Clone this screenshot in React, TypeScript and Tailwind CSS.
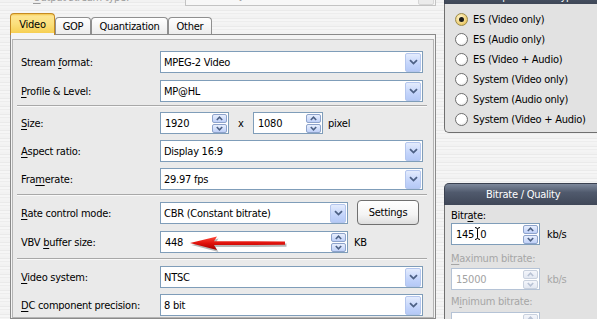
import React from "react";

function Chevron({ up = false, color = "#4d6185" }: { up?: boolean; color?: string }) {
  return (
    <svg width="7" height="5" viewBox="0 0 7 5">
      <path
        d={up ? "M0.8 4 L3.5 1.2 L6.2 4" : "M0.8 1 L3.5 3.8 L6.2 1"}
        stroke={color}
        strokeWidth="1.6"
        fill="none"
      />
    </svg>
  );
}

function DropBtn() {
  return (
    <div className="w-[16px] h-[19px] rounded-[2px] border border-[#b4c6ee] bg-[linear-gradient(to_bottom,#e4ecfd,#c3d4fb_60%,#b5c9f6)] flex items-center justify-center">
      <svg width="9" height="6" viewBox="0 0 9 6">
        <path d="M1 1.2 L4.5 4.6 L8 1.2" stroke="#4d6185" strokeWidth="1.8" fill="none" />
      </svg>
    </div>
  );
}

function Spin({ disabled = false }: { disabled?: boolean }) {
  const half = disabled
    ? "h-[9px] rounded-[2px] border border-[#c9d1de] bg-[linear-gradient(to_bottom,#f4f6fb,#e3e8f2)] flex items-center justify-center"
    : "h-[9px] rounded-[2px] border border-[#8ea3cb] bg-[linear-gradient(to_bottom,#e8effd,#bfd0f8)] flex items-center justify-center";
  const c = disabled ? "#b8c2d4" : "#4d6185";
  return (
    <div className="flex flex-col w-[15px] gap-[1px]">
      <div className={half}>
        <Chevron up color={c} />
      </div>
      <div className={half}>
        <Chevron color={c} />
      </div>
    </div>
  );
}

function Combo({ value, className }: { value: string; className: string }) {
  return (
    <div className={`h-[22px] border border-[#7f9db9] bg-white flex items-center justify-between pl-[3px] pr-[1px] ${className}`}>
      <span>{value}</span>
      <DropBtn />
    </div>
  );
}

function SpinField({ children, className, disabled = false }: { children: React.ReactNode; className: string; disabled?: boolean }) {
  return (
    <div
      className={`h-[22px] border ${disabled ? "border-[#b5c3d6] text-[#a3a3a3]" : "border-[#7f9db9]"} bg-white flex items-center justify-between pl-[4px] pr-[1px] ${className}`}
    >
      <span className="flex items-center">{children}</span>
      <Spin disabled={disabled} />
    </div>
  );
}

function U({ c }: { c: string }) {
  return <span className="underline underline-offset-[2px]">{c}</span>;
}

function Row({ label, children, className }: { label: React.ReactNode; children: React.ReactNode; className: string }) {
  return (
    <div className={`flex items-center h-[22px] pl-[8px] ${className}`}>
      <div className="w-[139px] shrink-0">{label}</div>
      {children}
    </div>
  );
}

function Sep({ className }: { className: string }) {
  return <div className={`ml-[4px] w-[410px] h-[2px] border-t border-t-[#a8a8a8] bg-[#f9f9f9] ${className}`} />;
}

function Radio({ checked = false, label }: { checked?: boolean; label: string }) {
  return (
    <div className="flex items-center h-[20px] gap-[5px]">
      {checked ? (
        <div className="w-[13px] h-[13px] rounded-full border border-[#9b8a4a] bg-[radial-gradient(circle_at_40%_35%,#fff6d2,#f0d27a_60%,#d6ad3c)] flex items-center justify-center">
          <div className="w-[5px] h-[5px] rounded-full bg-[#1a1a1a]" />
        </div>
      ) : (
        <div className="w-[13px] h-[13px] rounded-full border border-[#6f6f6f] bg-[radial-gradient(circle_at_40%_35%,#ffffff,#ffffff_50%,#d9d9d9)]" />
      )}
      <span>{label}</span>
    </div>
  );
}

function IBeam() {
  return (
    <span className="inline-block w-[6px] h-[14px] relative">
      <svg width="7" height="15" viewBox="0 0 7 15" className="absolute left-0 -top-px">
        <path d="M1 1.5 Q3.5 1.5 3.5 3.5 V11.5 Q3.5 13.5 1 13.5 M6 1.5 Q3.5 1.5 3.5 3.5 M3.5 11.5 Q3.5 13.5 6 13.5" stroke="#ffffff" strokeWidth="2.6" fill="none" />
        <path d="M1 1.5 Q3.5 1.5 3.5 3.5 V11.5 Q3.5 13.5 1 13.5 M6 1.5 Q3.5 1.5 3.5 3.5 M3.5 11.5 Q3.5 13.5 6 13.5" stroke="#000000" strokeWidth="1" fill="none" />
      </svg>
    </span>
  );
}

export default function App() {
  return (
    <div className="relative w-[597px] h-[319px] overflow-hidden flex text-[11px] leading-[13px] tracking-[-0.25px] text-black font-['DejaVu_Sans_Condensed','Liberation_Sans',sans-serif] bg-[repeating-linear-gradient(to_bottom,#f2f2f2_0px,#f2f2f2_2px,#eaeaea_2px,#eaeaea_3px,#f6f6f6_3px,#f6f6f6_5px,#ededed_5px,#ededed_6px,#f4f4f4_6px,#f4f4f4_8px)]">
      {/* Left column */}
      <div className="w-[437px] shrink-0 flex flex-col">
        {/* partially visible top row */}
        <div className="h-[6px] flex items-end">
          <span className="ml-[33px] mb-[2px] text-[#9c9c9c] w-[152px] shrink-0">
            <U c="O" />utput stream type:
          </span>
          <div className="w-[251px] h-[22px] shrink-0 border border-[#c3c3c3] bg-[#f7f7f7] flex items-center justify-between pl-[4px] pr-[1px] text-[#9c9c9c]">
            <span>Elementary stream</span>
            <div className="w-[16px] h-[19px] rounded-[2px] border border-[#d6d6d6] bg-[#ebebeb]" />
          </div>
        </div>

        {/* Tabs */}
        <div className="mt-[7px] h-[21px] flex items-end pl-[10px]">
          <div className="relative z-10 w-[45px] h-[22px] -mb-px rounded-t-[4px] border border-b-0 border-[#c58a22] bg-[linear-gradient(to_bottom,#f3c44a_0px,#fde592_2px,#fbe07c_10px,#f6cf52_19px,#f4f4f4_19px)] flex justify-center pt-[4px]">
            Video
          </div>
          <div className="w-[36px] h-[17px] rounded-t-[4px] border border-b-0 border-[#8f8f8f] bg-[linear-gradient(to_bottom,#ffffff,#ececec)] flex justify-center pt-[2px]">
            GOP
          </div>
          <div className="w-[77px] h-[17px] rounded-t-[4px] border border-b-0 border-[#8f8f8f] bg-[linear-gradient(to_bottom,#ffffff,#ececec)] flex justify-center pt-[2px]">
            Quantization
          </div>
          <div className="w-[44px] h-[17px] rounded-t-[4px] border border-b-0 border-[#8f8f8f] bg-[linear-gradient(to_bottom,#ffffff,#ececec)] flex justify-center pt-[2px]">
            Other
          </div>
        </div>

        {/* Tab panel */}
        <div className="ml-[10px] w-[426px] flex-1 border border-[#8a8a8a] bg-[#f4f4f4] pt-[4px] px-px">
          <div className="h-full border border-[#b4b4b4] bg-[#eaeaea] pt-[11px]">
            <Row className="" label={<span>Stream <U c="f" />ormat:</span>}>
              <Combo value="MPEG-2 Video" className="w-[263px]" />
            </Row>
            <Row className="mt-[7px]" label={<span><U c="P" />rofile &amp; Level:</span>}>
              <Combo value="MP@HL" className="w-[263px]" />
            </Row>
            <Sep className="mt-[3px]" />
            <Row className="mt-[5px]" label={<span><U c="S" />ize:</span>}>
              <SpinField className="w-[69px]">1920</SpinField>
              <span className="ml-[9px] w-[15px]">x</span>
              <SpinField className="w-[70px]">1080</SpinField>
              <span className="ml-[5px]">pixel</span>
            </Row>
            <Row className="mt-[6px]" label={<span><U c="A" />spect ratio:</span>}>
              <Combo value="Display 16:9" className="w-[263px]" />
            </Row>
            <Row className="mt-[6px]" label={<span>Fra<U c="m" />erate:</span>}>
              <Combo value="29.97 fps" className="w-[263px]" />
            </Row>
            <Sep className="mt-[4px]" />
            <Row className="mt-[6px]" label={<span><U c="R" />ate control mode:</span>}>
              <Combo value="CBR (Constant bitrate)" className="w-[188px]" />
              <div className="ml-[9px] w-[62px] h-[25px] -mt-[2px] rounded-[4px] border border-[#707070] bg-[linear-gradient(to_bottom,#ffffff,#f4f4f4_60%,#dedede)] flex items-center justify-center">
                Settings
              </div>
            </Row>
            <Row className="mt-[7px]" label={<span>VBV <U c="b" />uffer size:</span>}>
              <SpinField className="w-[188px]">448</SpinField>
              <span className="ml-[6px]">KB</span>
            </Row>
            <Sep className="mt-[5px]" />
            <Row className="mt-[6px]" label={<span><U c="V" />ideo system:</span>}>
              <Combo value="NTSC" className="w-[263px]" />
            </Row>
            <Row className="mt-[6px]" label={<span><U c="D" />C component precision:</span>}>
              <Combo value="8 bit" className="w-[263px]" />
            </Row>
          </div>
        </div>
      </div>

      {/* Right column */}
      <div className="flex-1 pl-[7px] flex flex-col">
        {/* Output stream type group */}
        <div className="-mt-[18px] w-[170px] shrink-0">
          <div className="h-[22px] bg-[linear-gradient(to_bottom,#7d889b,#505a6d_40%,#3f4757)] border border-b-0 border-[#3a4150] flex items-end pl-[40px]">
            <span className="text-white leading-[12px] pb-[1px]">Output stream type</span>
          </div>
          <div className="h-[129px] border-l border-b border-[#6f6f6f] rounded-bl-[5px] bg-[#e2e2e2] pl-[10px] pt-[5px]">
            <Radio checked label="ES (Video only)" />
            <Radio label="ES (Audio only)" />
            <Radio label="ES (Video + Audio)" />
            <Radio label="System (Video only)" />
            <Radio label="System (Audio only)" />
            <Radio label="System (Video + Audio)" />
          </div>
        </div>

        {/* Bitrate / Quality group */}
        <div className="mt-[50px] w-[170px] shrink-0">
          <div className="h-[22px] rounded-tl-[5px] bg-[linear-gradient(to_bottom,#7d889b,#505a6d_40%,#3f4757)] border border-b-0 border-[#3a4150] flex items-center pl-[41px]">
            <span className="text-white">Bitrate / Quality</span>
          </div>
          <div className="h-[140px] border-l border-[#6f6f6f] bg-[#e2e2e2] pl-[6px] pt-[3px]">
            <div className="h-[14px] flex items-center">
              Bitr<U c="a" />te:
            </div>
            <div className="mt-[1px] flex items-center">
              <SpinField className="w-[89px]">
                145<IBeam />0
              </SpinField>
              <span className="ml-[7px]">kb/s</span>
            </div>
            <div className="mt-[6px] h-[14px] flex items-center text-[#a6a6a6]">
              <U c="M" />aximum bitrate:
            </div>
            <div className="mt-[3px] flex items-center">
              <SpinField disabled className="w-[89px]">
                15000
              </SpinField>
              <span className="ml-[7px] text-[#a6a6a6]">kb/s</span>
            </div>
            <div className="mt-[4px] h-[14px] flex items-center text-[#a6a6a6]">
              M<U c="i" />nimum bitrate:
            </div>
            <div className="mt-[4px] flex items-center">
              <SpinField disabled className="w-[89px]">
                0
              </SpinField>
              <span className="ml-[7px] text-[#a6a6a6]">kb/s</span>
            </div>
          </div>
        </div>
      </div>

      {/* Red annotation arrow */}
      <svg className="absolute left-[186px] top-[232px]" width="106" height="24" viewBox="0 0 106 24">
        <defs>
          <linearGradient id="ar" x1="0" y1="0" x2="0" y2="1">
            <stop offset="0" stopColor="#ff4a3a" />
            <stop offset="0.5" stopColor="#e0120c" />
            <stop offset="1" stopColor="#a00000" />
          </linearGradient>
        </defs>
        <g opacity="0.28" transform="translate(1.5 2)">
          <path d="M4 11 L31 4.5 L28 9.2 L99 9.4 L99 12.8 L28 13 L31 18 Z" fill="#000" />
        </g>
        <path d="M4 11 L31 4.5 L28 9.2 L99 9.4 L99 12.8 L28 13 L31 18 Z" fill="url(#ar)" />
      </svg>
    </div>
  );
}
